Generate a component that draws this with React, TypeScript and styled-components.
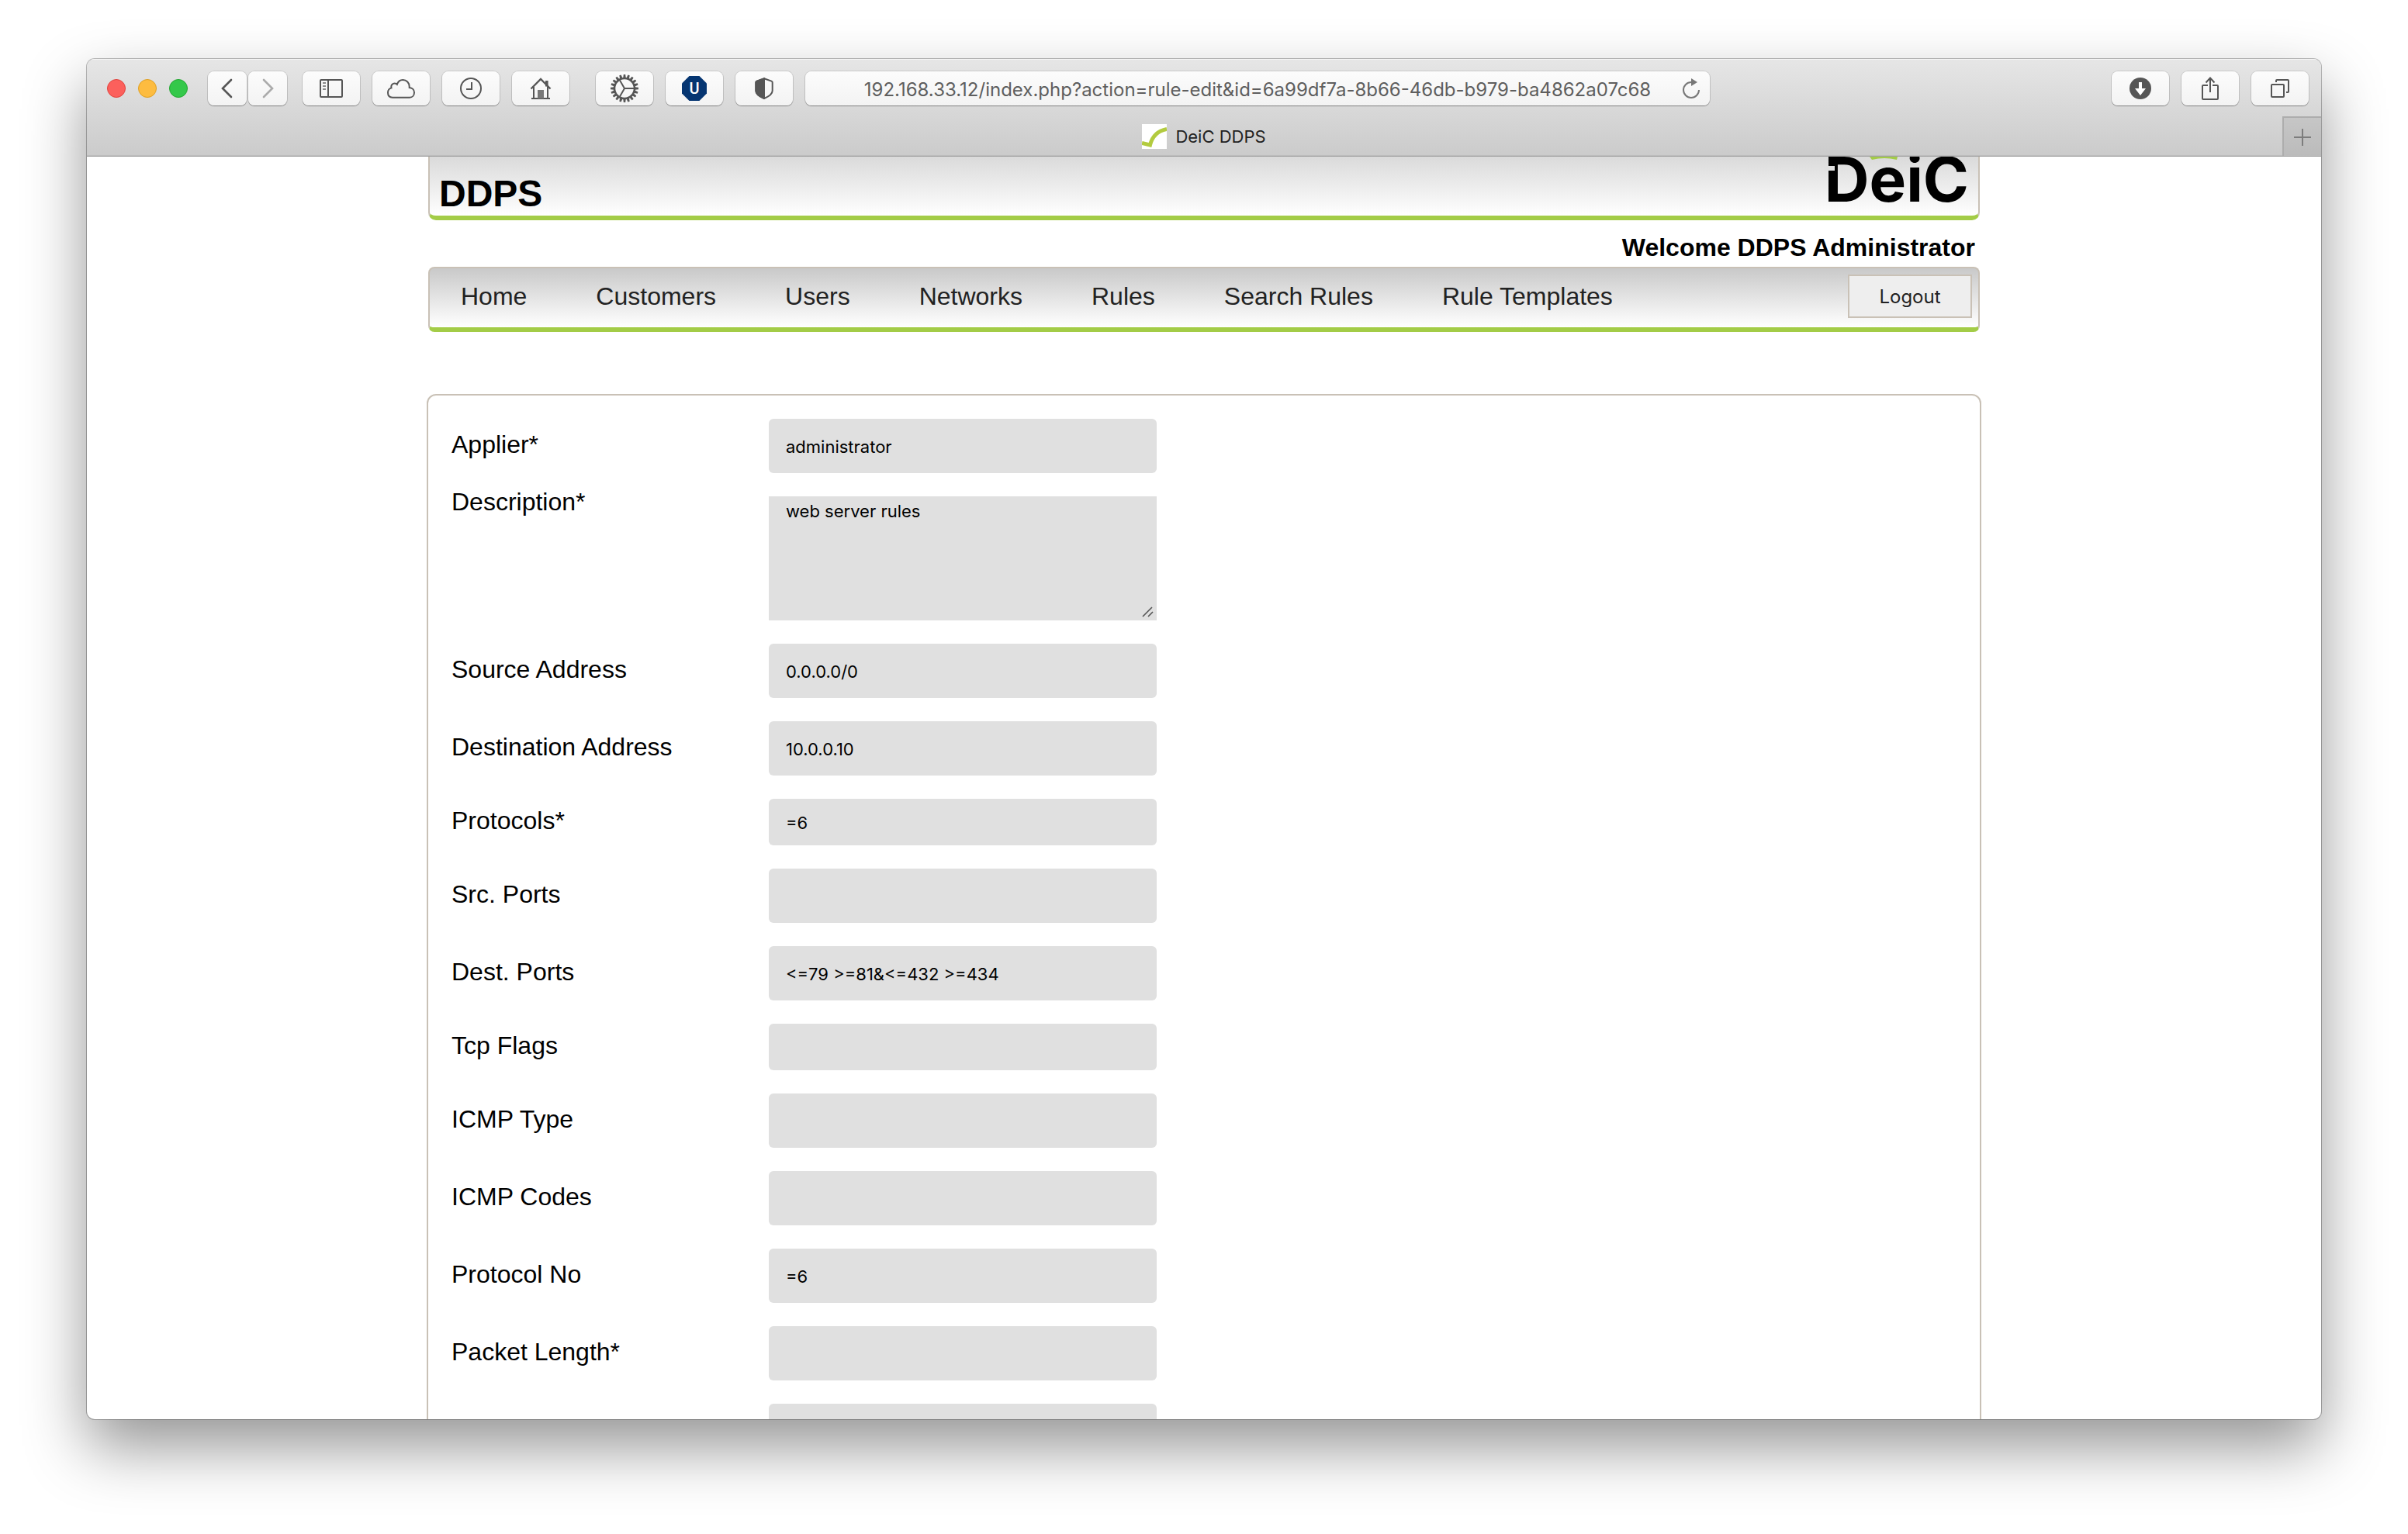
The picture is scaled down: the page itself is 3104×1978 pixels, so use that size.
import React, { useId } from 'react';
import styled, { createGlobalStyle } from 'styled-components';

const ui = 'Inter, "Liberation Sans", sans-serif';
const page = '"Liberation Sans", Arial, sans-serif';
const green = '#a3cc47';
const sand = '#c9c1b6';
const ink = '#565656';

const GlobalStyle = createGlobalStyle`
  * { box-sizing: border-box; }
  body { margin: 0; background: #fff; }
  button, input, textarea { font: inherit; color: inherit; margin: 0; }
`;

const Desktop = styled.div`
  display: flex;
  height: 100vh;
  padding: 76px 112px 148px;
  overflow: hidden;
`;

const Window = styled.div`
  flex: 1;
  min-width: 0;
  display: flex;
  flex-direction: column;
  overflow: hidden;
  border-radius: 10px;
  background: #fff;
  box-shadow: 0 0 0 1px rgba(0, 0, 0, 0.26), 0 36px 80px rgba(0, 0, 0, 0.42);
`;

const Chrome = styled.header`
  flex: none;
  background: linear-gradient(#e6e6e6, #cbcbcb);
  border-bottom: 1px solid #a0a0a0;
  box-shadow: inset 0 1px 0 #f6f6f6, inset 0 -1px 0 #bcbcbc;
  font-family: ${ui};
`;

const Toolbar = styled.div`
  display: flex;
  align-items: center;
  gap: 16px;
  padding: 16px 16px 14px 26px;
`;

const Lights = styled.div`
  display: flex;
  gap: 16px;
  margin-right: 10px;
`;

const Light = styled.button<{ $fill: string; $edge: string }>`
  width: 24px;
  height: 24px;
  padding: 0;
  border-radius: 50%;
  border: 1px solid ${p => p.$edge};
  background: ${p => p.$fill};
`;

const History = styled.div`
  display: flex;
  gap: 2px;
  margin-right: 4px;
`;

const Tools = styled.div<{ $spread?: boolean }>`
  display: flex;
  gap: 16px;
  margin-right: ${p => (p.$spread ? 18 : 0)}px;
`;

const ToolButton = styled.button<{ $narrow?: boolean; $faint?: boolean }>`
  display: flex;
  align-items: center;
  justify-content: center;
  width: ${p => (p.$narrow ? 50 : 74)}px;
  height: 44px;
  padding: 0;
  border: 0;
  border-radius: 8px;
  color: ${p => (p.$faint ? '#ababab' : ink)};
  background: linear-gradient(#fcfcfc, #f3f3f3);
  box-shadow: 0 0 0 1px rgba(0, 0, 0, 0.11), 0 1px 1px rgba(0, 0, 0, 0.32);
`;

const AddressBar = styled.div`
  position: relative;
  flex: 0 1 1166px;
  min-width: 0;
  margin-right: auto;
`;

const Address = styled.input`
  display: block;
  width: 100%;
  height: 44px;
  padding: 2px 48px 0;
  border: 0;
  border-radius: 8px;
  text-align: center;
  font-size: 24px;
  color: #5e5e5e;
  background: linear-gradient(#fcfcfc, #f3f3f3);
  box-shadow: 0 0 0 1px rgba(0, 0, 0, 0.11), 0 1px 1px rgba(0, 0, 0, 0.32);
`;

const Reload = styled.button`
  position: absolute;
  top: 0;
  right: 0;
  display: grid;
  place-items: center;
  width: 48px;
  height: 44px;
  padding: 0;
  border: 0;
  color: #777;
  background: none;
`;

const TabStrip = styled.div`
  display: grid;
  grid-template-columns: 50px 1fr 50px;
  height: 51px;
`;

const Tab = styled.div`
  grid-column: 2;
  display: flex;
  align-items: center;
  justify-content: center;
  gap: 11px;
  font-size: 22px;
  color: #222;
`;

const NewTab = styled.button`
  display: grid;
  place-items: center;
  padding: 0;
  border: 0;
  border-left: 2px solid #adadad;
  border-top: 2px solid #adadad;
  color: #7d7d7d;
  background: linear-gradient(#c6c6c6, #bbb);
`;

const Viewport = styled.main`
  flex: 1;
  min-height: 0;
  overflow: hidden;
  font-family: ${page};
  font-size: 32px;
  line-height: 36px;
  color: #000;
`;

const Page = styled.div`
  width: 100%;
  max-width: 2000px;
  margin: 0 auto;
`;

const Masthead = styled.div`
  display: flex;
  align-items: flex-end;
  justify-content: space-between;
  height: 82px;
  padding: 0 12px 4px;
  border: 2px solid ${sand};
  border-top: 0;
  border-bottom: 6px solid ${green};
  border-radius: 0 0 10px 10px;
  background: linear-gradient(#dadada, #fff);
`;

const Title = styled.h1`
  margin: 0;
  font-size: 48px;
  line-height: 48px;
`;

const Logo = styled.div`
  position: relative;
  padding-bottom: 14px;
  font: 700 80px/58px ${ui};
`;

const LogoMarks = styled.svg`
  position: absolute;
  right: 0;
  top: 0;
`;

const Welcome = styled.p`
  margin: 0;
  padding: 17px 6px 7px;
  text-align: right;
  font-weight: 700;
`;

const Nav = styled.nav`
  display: flex;
  align-items: center;
  gap: 89px;
  height: 84px;
  padding: 0 8px 4px 40px;
  border: 2px solid ${sand};
  border-bottom: 6px solid ${green};
  border-radius: 8px;
  background: linear-gradient(#c9c9c9, #fff);
`;

const NavLink = styled.a`
  color: #222;
  text-decoration: none;
`;

const Logout = styled.button`
  width: 160px;
  height: 56px;
  margin-left: auto;
  padding: 0;
  border: 2px solid ${sand};
  font: 24px ${ui};
  color: #222;
  background: #eee;
`;

const Form = styled.form`
  display: flex;
  flex-direction: column;
  gap: 30px;
  margin: 80px -2px 0;
  padding: 30px;
  border: 2px solid ${sand};
  border-radius: 12px;
`;

const Row = styled.div<{ $top?: boolean }>`
  display: grid;
  grid-template-columns: 409px 500px;
  align-items: ${p => (p.$top ? 'start' : 'center')};
`;

const Label = styled.label<{ $top?: boolean }>`
  padding-bottom: 4px;
  line-height: ${p => (p.$top ? 14 : 36)}px;
`;

const Field = styled.input<{ $short?: boolean }>`
  grid-column: 2;
  width: 100%;
  height: ${p => (p.$short ? 60 : 70)}px;
  padding: 2px 22px 0;
  border: 0;
  border-radius: 6px;
  font: 22px ${ui};
  background: #e0e0e0;
`;

const AreaBox = styled.div`
  position: relative;
`;

const Area = styled.textarea`
  display: block;
  width: 100%;
  height: 160px;
  padding: 6px 22px;
  border: 0;
  resize: none;
  font: 22px/26px ${ui};
  background: #e0e0e0;
`;

const Grip = styled.svg`
  position: absolute;
  right: 3px;
  bottom: 3px;
`;

const line = { fill: 'none', stroke: 'currentColor', strokeWidth: 2 } as const;

const Chevron = ({ flip }: { flip?: boolean }) => (
  <svg width="18" height="26" viewBox="0 0 18 26" {...line} strokeWidth={2.6} strokeLinecap="round">
    <path d={flip ? 'M4 2L15 13L4 24' : 'M14 2L3 13L14 24'} />
  </svg>
);

const SidebarIcon = () => (
  <svg width="30" height="24" viewBox="0 0 30 24" {...line}>
    <rect x="1" y="1" width="28" height="22" rx="1" />
    <path d="M11 1V23" />
    <path d="M4 5H8M4 9H8M4 13H8" stroke="#8a8a8a" />
  </svg>
);

const CloudIcon = () => (
  <svg width="36" height="25" viewBox="0 0 36 25" {...line}>
    <path d="M7 23.7C3 23.7 1 21 1 17.6C1 14.5 3 12 5.5 11.4C4.6 8 7 5.4 9.8 5.4C11 5.4 12 5.9 12.8 6.8C14.2 3 17 1 20.3 1C25 1 28.8 4.8 28.7 10V11C32.5 11.3 35 14 35 17.2C35 21 32.5 23.7 29 23.7Z" />
  </svg>
);

const ClockIcon = () => (
  <svg width="28" height="28" viewBox="0 0 28 28" {...line}>
    <circle cx="14" cy="14" r="13" />
    <path d="M15 6V15H8" />
  </svg>
);

const HouseIcon = () => (
  <svg width="28" height="28" viewBox="0 0 28 28" {...line}>
    <path d="M1.5 14.5L14 2L26.5 14.5" strokeWidth="2.4" />
    <path d="M5 12V27M23 12V27M2 27H26" />
    <rect x="20" y="4" width="3.6" height="7.5" fill="currentColor" stroke="none" />
    <rect x="10" y="16" width="8" height="11" fill="#777" stroke="none" />
  </svg>
);

const GearIcon = () => (
  <svg width="36" height="36" viewBox="-18 -18 36 36" {...line}>
    <circle r="13" strokeWidth="2.6" />
    {Array.from({ length: 20 }, (_, i) => (
      <path key={i} d="M13 -1.8L18 -1.2V1.2L13 1.8Z" fill="currentColor" stroke="none" transform={`rotate(${i * 18})`} />
    ))}
    <path d="M0 0H13M0 0L-6.5 -11.3M0 0L-6.5 11.3" />
  </svg>
);

const BlockerIcon = () => (
  <svg width="32" height="32" viewBox="0 0 32 32">
    <path d="M9.5 0H22.5L32 9.5V22.5L22.5 32H9.5L0 22.5V9.5Z" fill="#053571" />
    <text x="16" y="23" textAnchor="middle" fill="#fff" fontFamily="Roboto, sans-serif" fontWeight="500" fontSize="20">U</text>
  </svg>
);

const ShieldIcon = () => (
  <svg width="24" height="28" viewBox="0 0 24 28" {...line}>
    <path d="M12 1.2L21.5 4.6Q22.7 5 22.7 6.5V17Q22.7 22.5 12 27Q1.3 22.5 1.3 17V6.5Q1.3 5 2.5 4.6Z" />
    <path d="M12 1.2L2.5 4.6Q1.3 5 1.3 6.5V17Q1.3 22.5 12 27Z" fill="currentColor" />
  </svg>
);

const DownloadIcon = () => (
  <svg width="28" height="28" viewBox="0 0 28 28">
    <circle cx="14" cy="14" r="14" fill="currentColor" />
    <path d="M12 6H16V14H21L14 23L7 14H12Z" fill="#fff" />
  </svg>
);

const ShareIcon = () => (
  <svg width="24" height="32" viewBox="0 0 24 32" {...line}>
    <path d="M9 12H3Q2 12 2 13V29Q2 30 3 30H21Q22 30 22 29V13Q22 12 21 12H15" />
    <path d="M12 21V3M6.5 8.5L12 2.5L17.5 8.5" />
  </svg>
);

const TabsIcon = () => (
  <svg width="24" height="24" viewBox="0 0 24 24" {...line}>
    <rect x="1" y="7" width="16" height="16" rx="1" />
    <path d="M7 4V2Q7 1 8 1H22Q23 1 23 2V16Q23 17 22 17H20" />
  </svg>
);

const ReloadIcon = () => (
  <svg width="24" height="28" viewBox="0 0 24 28" {...line}>
    <path d="M12 6A10 10 0 1 0 22 16" />
    <path d="M12 1L20 6L12 11Z" fill="currentColor" stroke="none" />
  </svg>
);

const PlusIcon = () => (
  <svg width="22" height="22" viewBox="0 0 22 22" {...line}>
    <path d="M11 0V22M0 11H22" />
  </svg>
);

const Favicon = () => (
  <svg width="32" height="32" viewBox="0 0 32 32">
    <rect width="32" height="32" fill="#fff" />
    <path d="M0 24.5L10.5 27C13 17 19 9 32 6.5" fill="none" stroke="#b3cb3f" strokeWidth="5" />
  </svg>
);

const links = ['Home', 'Customers', 'Users', 'Networks', 'Rules', 'Search Rules', 'Rule Templates'];

type Entry = { label?: string; value?: string; short?: boolean; multiline?: boolean };

const entries: Entry[] = [
  { label: 'Applier*', value: 'administrator' },
  { label: 'Description*', value: 'web server rules', multiline: true },
  { label: 'Source Address', value: '0.0.0.0/0' },
  { label: 'Destination Address', value: '10.0.0.10' },
  { label: 'Protocols*', value: '=6', short: true },
  { label: 'Src. Ports' },
  { label: 'Dest. Ports', value: '<=79 >=81&<=432 >=434' },
  { label: 'Tcp Flags', short: true },
  { label: 'ICMP Type' },
  { label: 'ICMP Codes' },
  { label: 'Protocol No', value: '=6' },
  { label: 'Packet Length*' },
  {},
];

function FormRow({ label, value, short, multiline }: Entry) {
  const id = useId();
  return (
    <Row $top={multiline}>
      {label && <Label htmlFor={id} $top={multiline}>{label}</Label>}
      {multiline ? (
        <AreaBox>
          <Area id={id} defaultValue={value} spellCheck={false} />
          <Grip width="16" height="16" viewBox="0 0 16 16" fill="none" stroke="#555" strokeWidth="1.6">
            <path d="M1 14L13 2M8 14L14 8" />
          </Grip>
        </AreaBox>
      ) : (
        <Field id={id} type="text" defaultValue={value} $short={short} aria-label={label ? undefined : 'Fragmentation'} />
      )}
    </Row>
  );
}

export default function App() {
  return (
    <Desktop>
      <GlobalStyle />
      <Window>
        <Chrome>
          <Toolbar>
            <Lights>
              <Light aria-label="Close" $fill="#fc605c" $edge="#e0443e" />
              <Light aria-label="Minimize" $fill="#fdbc40" $edge="#dfa023" />
              <Light aria-label="Zoom" $fill="#34c84a" $edge="#24a732" />
            </Lights>
            <History>
              <ToolButton $narrow aria-label="Back"><Chevron /></ToolButton>
              <ToolButton $narrow $faint aria-label="Forward"><Chevron flip /></ToolButton>
            </History>
            <Tools $spread>
              <ToolButton aria-label="Sidebar"><SidebarIcon /></ToolButton>
              <ToolButton aria-label="Cloud tabs"><CloudIcon /></ToolButton>
              <ToolButton aria-label="History"><ClockIcon /></ToolButton>
              <ToolButton aria-label="Home page"><HouseIcon /></ToolButton>
            </Tools>
            <Tools>
              <ToolButton aria-label="Settings"><GearIcon /></ToolButton>
              <ToolButton aria-label="Blocker"><BlockerIcon /></ToolButton>
              <ToolButton aria-label="Privacy report"><ShieldIcon /></ToolButton>
            </Tools>
            <AddressBar>
              <Address
                aria-label="Address"
                spellCheck={false}
                defaultValue="192.168.33.12/index.php?action=rule-edit&id=6a99df7a-8b66-46db-b979-ba4862a07c68"
              />
              <Reload aria-label="Reload"><ReloadIcon /></Reload>
            </AddressBar>
            <Tools>
              <ToolButton aria-label="Downloads"><DownloadIcon /></ToolButton>
              <ToolButton aria-label="Share"><ShareIcon /></ToolButton>
              <ToolButton aria-label="Show tabs"><TabsIcon /></ToolButton>
            </Tools>
          </Toolbar>
          <TabStrip>
            <Tab><Favicon />DeiC DDPS</Tab>
            <NewTab aria-label="New tab"><PlusIcon /></NewTab>
          </TabStrip>
        </Chrome>
        <Viewport>
          <Page>
            <Masthead>
              <Title>DDPS</Title>
              <Logo>
                DeiC
                <LogoMarks width="186" height="72" viewBox="0 0 186 72" aria-hidden="true">
                  <path d="M58 0H94L93 4Q77 0 61 4Z" fill={green} />
                  <path d="M0 15H13" stroke="#e0e0e0" strokeWidth="6" />
                </LogoMarks>
              </Logo>
            </Masthead>
            <Welcome>Welcome DDPS Administrator</Welcome>
            <Nav>
              {links.map(text => <NavLink key={text} href="#">{text}</NavLink>)}
              <Logout>Logout</Logout>
            </Nav>
            <Form>
              {entries.map((entry, i) => <FormRow key={i} {...entry} />)}
            </Form>
          </Page>
        </Viewport>
      </Window>
    </Desktop>
  );
}
